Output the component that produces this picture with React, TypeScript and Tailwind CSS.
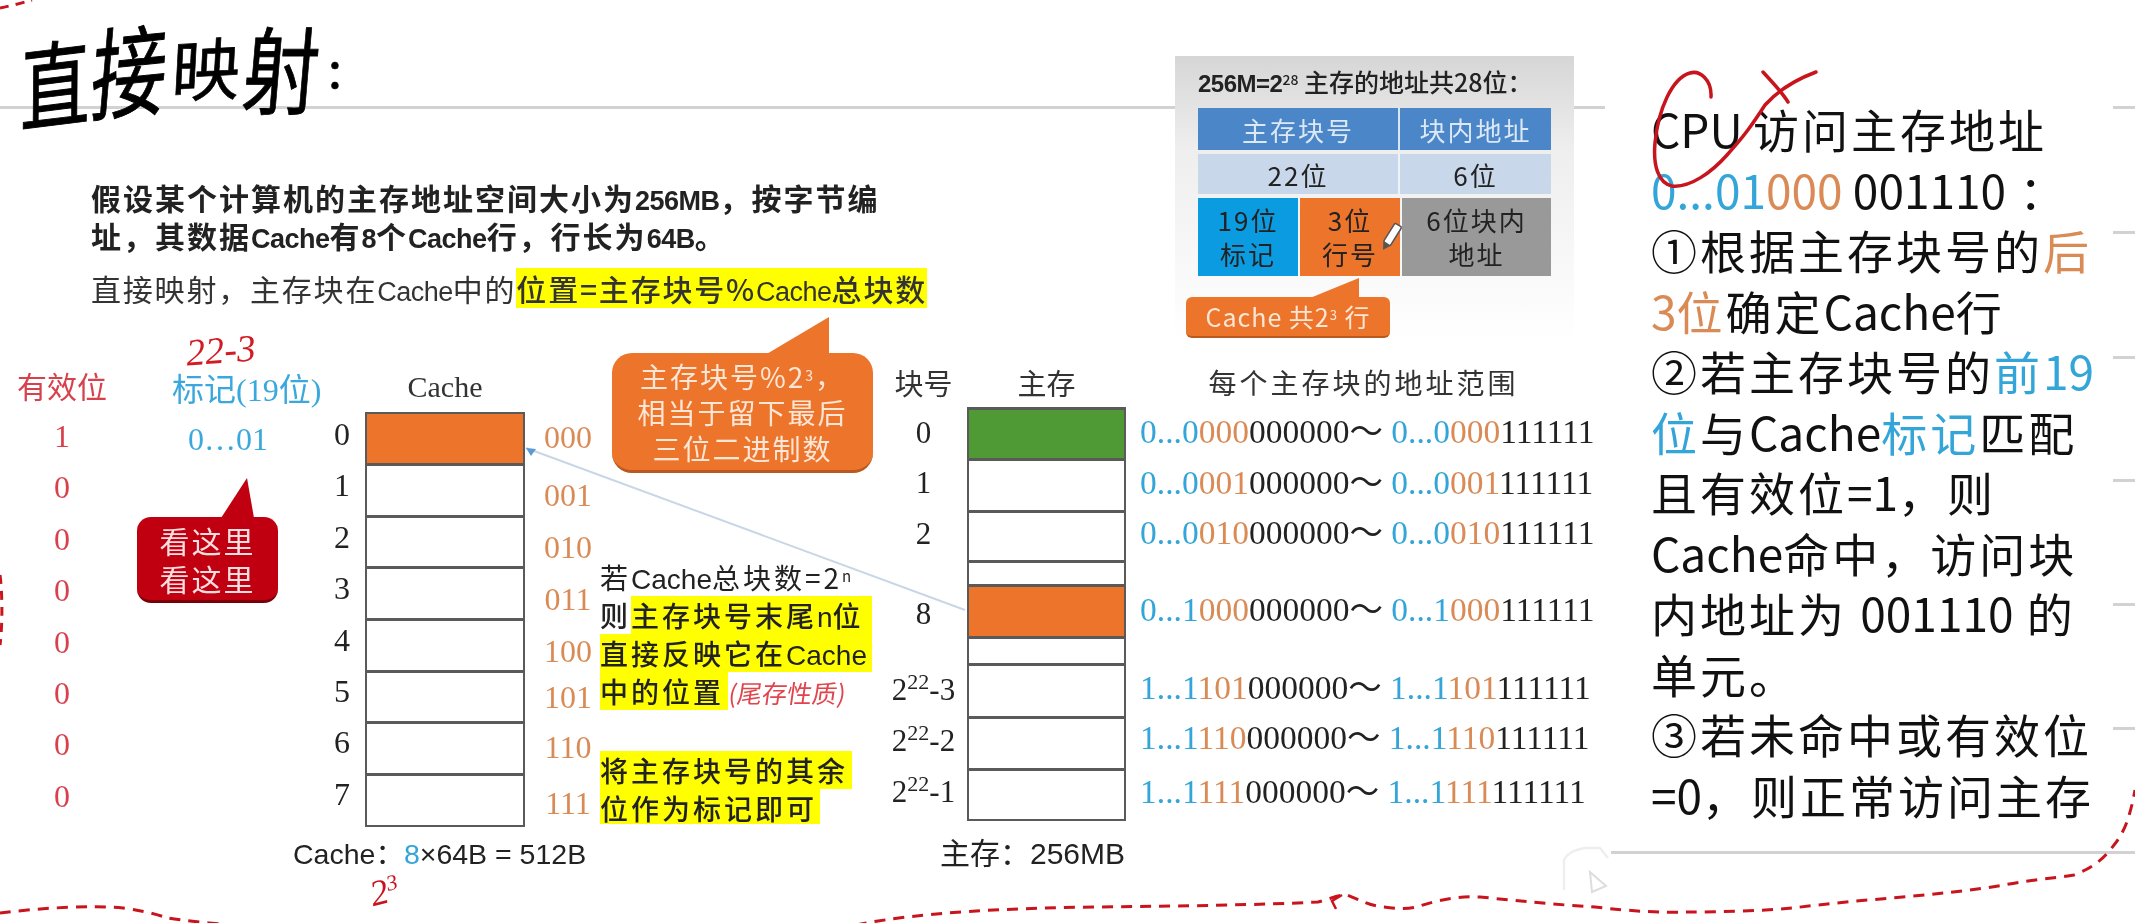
import React from "react";

const serif = "font-['Liberation_Serif','Noto_Sans_CJK_SC',serif]";

const L = ({ children }: { children: React.ReactNode }) => (
  <span className="text-[0.9em] tracking-[-0.5px] font-['Liberation_Sans','Noto_Sans_CJK_SC',sans-serif]">{children}</span>
);
const N = ({ children }: { children: React.ReactNode }) => (
  <span className="tracking-normal font-['Liberation_Sans','Noto_Sans_CJK_SC',sans-serif]">{children}</span>
);
const T = ({ children }: { children: React.ReactNode }) => <span className="tracking-normal">{children}</span>;

const B = ({ children }: { children: React.ReactNode }) => <span className="text-[#33a5d8]">{children}</span>;
const O = ({ children }: { children: React.ReactNode }) => <span className="text-[#d98a55]">{children}</span>;

const addr = [
  ["0...0", "000", "mt-0"],
  ["0...0", "001", "mt-[11px]"],
  ["0...0", "010", "mt-[10px]"],
  ["0...1", "000", "mt-[37px]"],
  ["1...1", "101", "mt-[38px]"],
  ["1...1", "110", "mt-[10px]"],
  ["1...1", "111", "mt-[14px]"],
];

const bins = [
  ["000", "mt-0"],
  ["001", "mt-[18px]"],
  ["010", "mt-[12px]"],
  ["011", "mt-[12px]"],
  ["100", "mt-[12px]"],
  ["101", "mt-[6px]"],
  ["110", "mt-[10px]"],
  ["111", "mt-[16px]"],
];

const Pow = ({ b }: { b: string }) => (
  <span>
    2<sup className="text-[22px] leading-none">22</sup>
    {b}
  </span>
);

const blockNos: [React.ReactNode, string][] = [
  ["0", "mt-0"],
  ["1", "mt-[10px]"],
  ["2", "mt-[11px]"],
  ["8", "mt-[40px]"],
  [<Pow b="-3" />, "mt-[36px]"],
  [<Pow b="-2" />, "mt-[11px]"],
  [<Pow b="-1" />, "mt-[11px]"],
];

const memRows = [
  "h-[51px] bg-[#4f9a35]",
  "h-[52px] bg-white",
  "h-[50px] bg-white",
  "h-[24px] bg-white",
  "h-[52px] bg-[#ec742b]",
  "h-[27px] bg-white",
  "h-[53px] bg-white",
  "h-[52px] bg-white",
  "h-[51px] bg-white",
];

const Title = () => (
  <div className="flex h-[172px] items-start pl-[20px] pt-[26px] font-['Noto_Sans_CJK_SC',sans-serif] text-black [-webkit-text-stroke:0.7px_black]">
    <span className="mt-[14px] w-[72px] text-[70px] leading-[80px] rotate-[-7deg] skew-x-[-10deg] scale-y-[1.35]">直</span>
    <span className="w-[80px] text-[76px] leading-[80px] rotate-[-6deg] skew-x-[-14deg] scale-y-[1.3]">接</span>
    <span className="w-[72px] text-[68px] leading-[80px] rotate-[-3deg] skew-x-[-6deg]">映</span>
    <span className="w-[84px] text-[76px] leading-[80px] skew-x-[-6deg] scale-y-[1.25]">射</span>
    <span className="text-[50px] leading-[80px]">:</span>
  </div>
);

const Intro = () => (
  <div className="flex h-[193px] flex-col pl-[91px] font-['Noto_Sans_CJK_SC',sans-serif] text-[#222]">
    <div className="mt-[6px] h-[38px] whitespace-nowrap text-[30px] font-bold leading-[38px] tracking-[2px]">
      假设某个计算机的主存地址空间大小为<L>256MB</L>，按字节编
    </div>
    <div className="h-[38px] whitespace-nowrap text-[30px] font-bold leading-[38px] tracking-[2px]">
      址，其数据<L>Cache</L>有<L>8</L>个<L>Cache</L>行，行长为<L>64B</L>。
    </div>
    <div className="mt-[14px] flex h-[40px] whitespace-nowrap text-[30px] leading-[40px] tracking-[1.8px] text-[#333]">
      <span>
        直接映射，主存块在<L>Cache</L>中的
      </span>
      <span className="bg-[#ffff00] font-medium">
        位置=主存块号%<L>Cache</L>总块数
      </span>
    </div>
  </div>
);

const ValidCol = () => (
  <div className={`flex w-[124px] flex-col items-center ${serif} text-[#d8404c]`}>
    <div className="h-[46px] pt-[3px] text-[30px] leading-[40px]">有效位</div>
    {["1", "0", "0", "0", "0", "0", "0", "0"].map((v, i) => (
      <div key={i} className="h-[51.4px] text-[32px] leading-[51px]">
        {v}
      </div>
    ))}
  </div>
);

const TagCol = () => (
  <div className={`flex w-[204px] flex-col pl-[48px] ${serif} text-[#3aa8dc]`}>
    <div className="h-[46px] whitespace-nowrap pt-[5px] text-[32px] leading-[40px]">标记(19位)</div>
    <div className="ml-[16px] h-[51.4px] text-[32px] leading-[56px]">0…01</div>
  </div>
);

const RowNos = () => (
  <div className={`flex w-[28px] flex-col items-center ${serif} text-[32px] text-[#222]`}>
    <div className="h-[46px]" />
    {[0, 1, 2, 3, 4, 5, 6, 7].map((n) => (
      <div key={n} className="h-[51.4px] leading-[47px]">
        {n}
      </div>
    ))}
  </div>
);

const CacheCol = () => (
  <div className="flex w-[180px] flex-col pl-[9px]">
    <div className={`h-[47px] w-[160px] text-center ${serif} text-[30px] leading-[44px] text-[#333]`}>Cache</div>
    <div className="flex w-[160px] flex-col border-[2.5px] border-[#5a5a5a] bg-white">
      <div className="h-[49px] bg-[#ec742b]" />
      {[1, 2, 3, 4, 5, 6, 7].map((n) => (
        <div key={n} className="h-[51.7px] border-t-[3px] border-[#5a5a5a]" />
      ))}
    </div>
  </div>
);

const BinCol = () => (
  <div className={`flex w-[64px] flex-col items-center pt-[52px] ${serif} text-[32px] text-[#d98a55]`}>
    {bins.map(([b, m]) => (
      <div key={b} className={`h-[40px] leading-[40px] ${m}`}>
        {b}
      </div>
    ))}
  </div>
);

const NoteCol = () => (
  <div className="flex w-[285px] flex-col pt-[193px] font-['Noto_Sans_CJK_SC',sans-serif] text-[28px] font-medium leading-[38px] tracking-[3px] text-[#222]">
    <div className="h-[38px] whitespace-nowrap font-normal">
      若<N>Cache</N>总块数=2<sup className="text-[15px]">n</sup>
    </div>
    <div className="flex h-[38px] w-[272px] whitespace-nowrap">
      <span>则</span>
      <span className="flex-1 bg-[#ffff00]">
        主存块号末尾<N>n</N>位
      </span>
    </div>
    <div className="h-[38px] w-[272px] whitespace-nowrap bg-[#ffff00]">
      直接反映它在<N>Cache</N>
    </div>
    <div className="h-[38px] w-[128px] whitespace-nowrap bg-[#ffff00]">中的位置</div>
    <div className="mt-[41px] h-[38px] w-[252px] whitespace-nowrap bg-[#ffff00]">将主存块号的其余</div>
    <div className="h-[35px] w-[220px] whitespace-nowrap bg-[#ffff00]">位作为标记即可</div>
  </div>
);

const BlockCol = () => (
  <div className={`flex w-[82px] flex-col items-center pr-[5px] ${serif} text-[31px] text-[#222]`}>
    <div className="h-[48px] font-['Noto_Sans_CJK_SC',sans-serif] text-[29px] leading-[34px] text-[#333]">块号</div>
    {blockNos.map(([v, m], i) => (
      <div key={i} className={`h-[40px] whitespace-nowrap leading-[40px] ${m}`}>
        {v}
      </div>
    ))}
  </div>
);

const MemCol = () => (
  <div className="flex w-[173px] flex-col">
    <div className="h-[42px] w-[159px] text-center font-['Noto_Sans_CJK_SC',sans-serif] text-[29px] leading-[34px] text-[#333]">主存</div>
    <div className="flex w-[159px] flex-col border-x-[2.5px] border-b-[2.5px] border-[#5a5a5a]">
      {memRows.map((c, i) => (
        <div key={i} className={`border-t-[3px] border-[#5a5a5a] ${c}`} />
      ))}
    </div>
  </div>
);

const AddrCol = () => (
  <div className={`flex w-[460px] flex-col ${serif} text-[33.5px] text-[#222]`}>
    <div className="h-[47px] w-[447px] text-center font-['Noto_Sans_CJK_SC',sans-serif] text-[28px] leading-[34px] tracking-[3px] text-[#333]">
      每个主存块的地址范围
    </div>
    {addr.map(([p, o, m], i) => (
      <div key={i} className={`h-[40px] whitespace-nowrap leading-[40px] ${m}`}>
        <B>{p}</B>
        <O>{o}</O>000000～ <B>{p}</B>
        <O>{o}</O>111111
      </div>
    ))}
  </div>
);

const Footer = () => (
  <div className="flex h-[48px] items-start pl-[293px] font-['Liberation_Sans','Noto_Sans_CJK_SC',sans-serif] text-[28.5px] leading-[48px] text-[#222]">
    <div className="w-[647px] whitespace-nowrap">
      Cache：<span className="text-[#33a5d8]">8</span>×64B = 512B
    </div>
    <div className="whitespace-nowrap text-[30px]">主存：256MB</div>
  </div>
);

const lines: React.ReactNode[] = [
  <>
    <T>CPU </T>访问主存地址
  </>,
  <>
    <T>
      <B>0...01</B>
      <O>000</O> 001110
    </T>{" "}
    ：
  </>,
  <>
    ①根据主存块号的<O>后</O>
  </>,
  <>
    <O>
      <T>3</T>位
    </O>
    确定<T>Cache</T>行
  </>,
  <>
    ②若主存块号的
    <B>
      前<T>19</T>
    </B>
  </>,
  <>
    <B>位</B>与<T>Cache</T>
    <B>标记</B>匹配
  </>,
  <>
    且有效位<T>=1</T>，则
  </>,
  <>
    <T>Cache</T>命中，访问块
  </>,
  <>
    内地址为 <T>001110</T> 的
  </>,
  <>单元。</>,
  <>③若未命中或有效位</>,
  <>
    <T>=0</T>，则正常访问主存
  </>,
];

const RightText = () => (
  <div className="flex flex-col pt-[98px] font-['Noto_Sans_CJK_SC',sans-serif] text-[46px] tracking-[3px] text-[#111]">
    {lines.map((l, i) => (
      <div key={i} className="h-[60.5px] whitespace-nowrap leading-[60.5px]">
        {l}
      </div>
    ))}
  </div>
);

const InfoBox = () => (
  <div className="absolute left-[1175px] top-[56px] flex h-[285px] w-[399px] flex-col bg-gradient-to-b from-[#d6d6d6] via-[#eeeeee] via-[32%] to-white pl-[23px] font-['Noto_Sans_CJK_SC',sans-serif] text-[#222]">
    <div className="h-[52px] whitespace-nowrap pt-[5px] text-[25px] font-medium leading-[40px]">
      <span className="font-['Liberation_Sans',sans-serif] text-[24px] font-bold tracking-[-0.5px]">256M=2</span>
      <sup className="text-[14px]">28</sup> 主存的地址共28位：
    </div>
    <div className="grid w-[353px] grid-cols-[202px_151px] gap-y-[4px] text-[26px] tracking-[2px]">
      <div className="flex h-[42px] items-center justify-center border-r-[2px] border-[#d9e6f2] bg-[#4a86c8] text-[#dce8f5]">主存块号</div>
      <div className="flex h-[42px] items-center justify-center bg-[#4a86c8] text-[#dce8f5]">块内地址</div>
      <div className="flex h-[40px] items-center justify-center border-r-[2px] border-[#eef3f9] bg-[#c9d7ea]">22位</div>
      <div className="flex h-[40px] items-center justify-center bg-[#c9d7ea]">6位</div>
      <div className="flex h-[78px]">
        <div className="flex w-[100px] flex-col items-center justify-center bg-[#0b9be0] leading-[34px]">
          <span>19位</span>
          <span>标记</span>
        </div>
        <div className="ml-[2px] flex w-[100px] flex-col items-center justify-center bg-[#ec742b] leading-[34px]">
          <span>3位</span>
          <span>行号</span>
        </div>
      </div>
      <div className="ml-[2px] flex h-[78px] flex-col items-center justify-center bg-[#999999] leading-[34px]">
        <span>6位块内</span>
        <span>地址</span>
      </div>
    </div>
  </div>
);

const Callouts = () => (
  <>
    <svg className="absolute left-[765px] top-[317px]" width="64" height="38" viewBox="0 0 64 38">
      <polygon points="0,38 64,0 64,38" fill="#ec742b" />
    </svg>
    <div className="absolute left-[612px] top-[353px] flex h-[120px] w-[261px] flex-col items-center justify-center rounded-[20px] border-b-[3px] border-[#b9581f] bg-[#ec742b] font-['Noto_Sans_CJK_SC',sans-serif] text-[28px] leading-[36px] tracking-[2px] text-[#fde6d6]">
      <div className="whitespace-nowrap">
        主存块号%2<sup className="text-[14px]">3</sup>，
      </div>
      <div className="whitespace-nowrap">相当于留下最后</div>
      <div className="whitespace-nowrap">三位二进制数</div>
    </div>

    <svg className="absolute left-[221px] top-[478px]" width="33" height="40" viewBox="0 0 33 40">
      <polygon points="0,40 26,0 33,40" fill="#c00010" />
    </svg>
    <div className="absolute left-[137px] top-[517px] flex h-[86px] w-[141px] flex-col items-center justify-center rounded-[14px] border-b-[3px] border-[#7a0008] bg-[#c00010] font-['Noto_Sans_CJK_SC',sans-serif] text-[30px] leading-[38px] tracking-[2px] text-[#fbdfe0]">
      <div>看这里</div>
      <div>看这里</div>
    </div>

    <svg className="absolute left-[1310px] top-[278px]" width="50" height="20" viewBox="0 0 50 20">
      <polygon points="0,20 49,0 49,20" fill="#ec742b" />
    </svg>
    <div className="absolute left-[1186px] top-[297px] flex h-[41px] w-[204px] items-center justify-center rounded-[6px] border-b-[2px] border-[#b9581f] bg-[#ec742b] font-['Noto_Sans_CJK_SC',sans-serif] text-[25px] tracking-[1px] text-[#fde6d6]">
      <span className="whitespace-nowrap">
        Cache 共2<sup className="text-[13px]">3</sup> 行
      </span>
    </div>
  </>
);

const RED = "#c8141c";

const Ink = () => (
  <>
    <svg className="absolute left-0 top-0" width="2135" height="923" viewBox="0 0 2135 923" fill="none">
      <line x1="526" y1="448" x2="965" y2="610" stroke="#c9d6e6" strokeWidth="2" />
      <path d="M526 448 l10 1 l-5 7 z" fill="#5b9bd5" />
      <path
        d="M1711 97 C1712 80 1700 70 1690 73 C1672 78 1658 110 1655 143 C1653 165 1658 183 1672 186 C1690 188 1712 172 1727 155 C1745 135 1752 125 1765 105 C1780 88 1800 78 1816 72"
        stroke={RED}
        strokeWidth="3.5"
        strokeLinecap="round"
      />
      <path d="M1763 72 C1772 82 1782 92 1788 102" stroke={RED} strokeWidth="3.5" strokeLinecap="round" />
      <path
        d="M0 913 C40 908 90 905 123 908 C140 910 155 914 168 918 C185 921 210 923 231 925"
        stroke={RED}
        strokeWidth="3"
        strokeDasharray="11 8"
      />
      <path
        d="M856 925 C920 912 1010 908 1100 907 C1180 906 1260 905 1318 902 C1330 899 1340 894 1347 895 C1360 900 1370 906 1384 907 C1398 909 1408 909 1417 907 C1440 899 1460 896 1480 897 C1520 901 1560 905 1595 907 C1630 911 1660 913 1687 912 C1720 912 1760 911 1793 908 C1860 899 1940 896 2004 885 C2030 880 2055 878 2074 875 C2092 868 2102 860 2110 850 C2120 838 2128 828 2135 790"
        stroke={RED}
        strokeWidth="3"
        strokeDasharray="11 8"
      />
      <path d="M0 575 C2 590 3 620 0 645" stroke={RED} strokeWidth="3" strokeDasharray="9 7" />
      <path d="M0 8 C10 6 22 3 32 0" stroke={RED} strokeWidth="3" strokeDasharray="9 7" />
      <path d="M1342 895 l-10 6 l4 8" stroke={RED} strokeWidth="2.5" />
      <g transform="translate(1391 237) rotate(32)">
        <rect x="-4" y="-14" width="8" height="22" rx="1.5" fill="#fff" stroke="#555" strokeWidth="1.5" />
        <path d="M-4 8 L0 15 L4 8 Z" fill="#555" />
      </g>
      <path d="M1564 890 L1564 860 C1568 852 1576 850 1584 848 L1600 848 L1608 858" stroke="#eeeeee" strokeWidth="2.5" />
      <path d="M1590 872 L1606 886 L1592 892 Z" stroke="#dddddd" strokeWidth="2" />
    </svg>
    <div className="absolute left-[186px] top-[328px] rotate-[-4deg] font-['Liberation_Serif',serif] text-[38px] italic leading-[44px] text-[#d21c24]">
      22-3
    </div>
    <div className="absolute left-[729px] top-[672px] skew-x-[-8deg] whitespace-nowrap font-['Noto_Sans_CJK_SC',sans-serif] text-[25px] leading-[40px] text-[#e0444c]">
      (尾存性质)
    </div>
    <div className="absolute left-[370px] top-[868px] rotate-[-14deg] font-['Liberation_Serif',serif] text-[36px] italic leading-[46px] text-[#c8141c]">
      2<sup className="text-[22px]">3</sup>
    </div>
  </>
);

const Rules = () => (
  <>
    <div className="absolute left-0 top-[106px] h-[3px] w-[1605px] bg-[#d2d2d2]" />
    <div className="absolute left-[2113px] top-[106px] h-[3px] w-[22px] bg-[#d2d2d2]" />
    <div className="absolute left-[2113px] top-[231px] h-[3px] w-[22px] bg-[#d2d2d2]" />
    <div className="absolute left-[2113px] top-[356px] h-[3px] w-[22px] bg-[#d2d2d2]" />
    <div className="absolute left-[2113px] top-[479px] h-[3px] w-[22px] bg-[#d2d2d2]" />
    <div className="absolute left-[2113px] top-[603px] h-[3px] w-[22px] bg-[#d2d2d2]" />
    <div className="absolute left-[2113px] top-[727px] h-[3px] w-[22px] bg-[#d2d2d2]" />
    <div className="absolute left-[1611px] top-[851px] h-[3px] w-[524px] bg-[#d2d2d2]" />
  </>
);

export default function App() {
  return (
    <div className="relative h-[923px] w-[2135px] overflow-hidden bg-white blur-[0.7px]">
      <Rules />
      <div className="relative flex h-full">
        <div className="flex w-[1651px] flex-col">
          <Title />
          <Intro />
          <div className="flex h-[465px]">
            <ValidCol />
            <TagCol />
            <RowNos />
            <CacheCol />
            <BinCol />
            <NoteCol />
            <BlockCol />
            <MemCol />
            <AddrCol />
          </div>
          <Footer />
        </div>
        <RightText />
      </div>
      <InfoBox />
      <Callouts />
      <Ink />
    </div>
  );
}
